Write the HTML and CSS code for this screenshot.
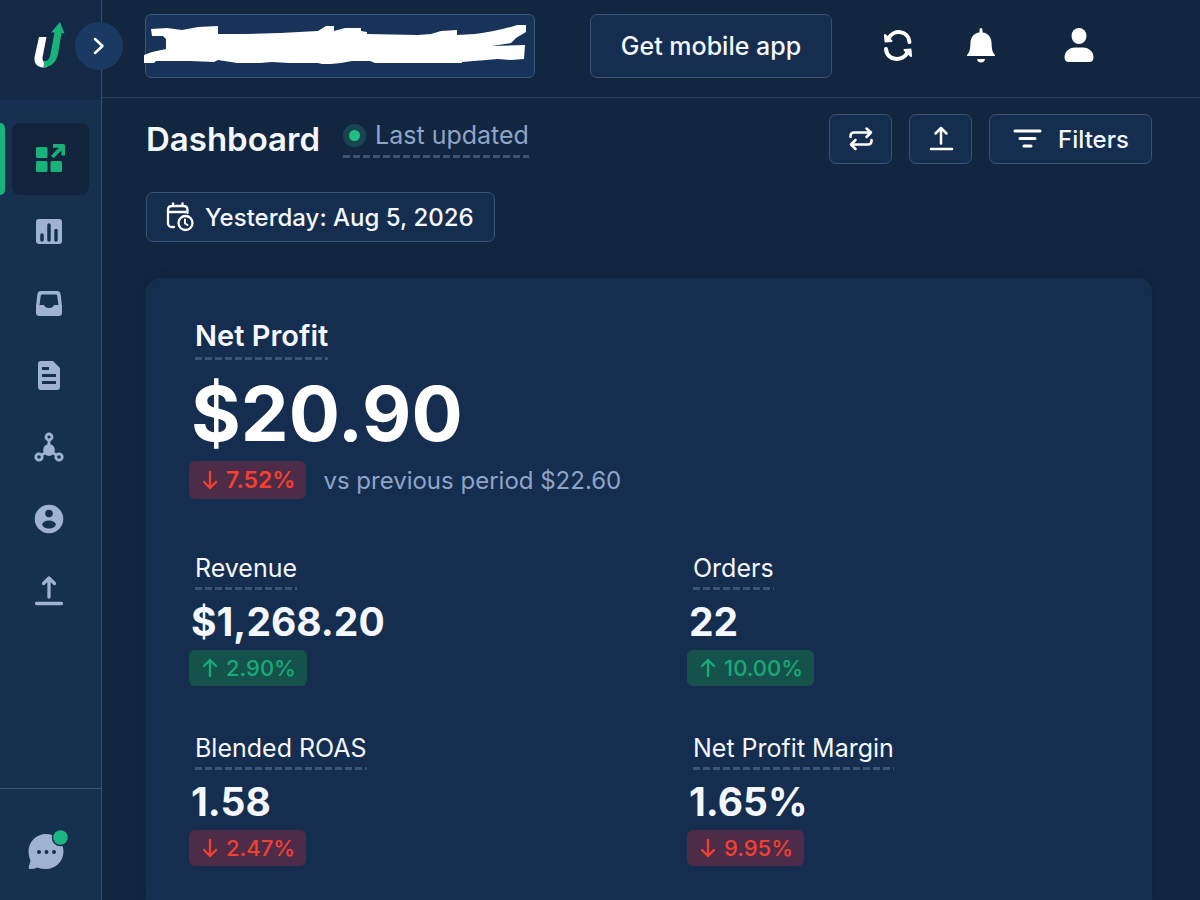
FILE: index.html
```html
<!DOCTYPE html>
<html lang="en">
<head>
    <meta charset="UTF-8">
    <meta name="viewport" content="width=device-width, initial-scale=1.0">
    <title>Dashboard</title>
    <link rel="stylesheet" href="styles.css">
</head>
<body>
    <aside class="sidebar">
        <div class="brand">
            <svg class="logo" width="32" height="48" viewBox="34 21 32 48" aria-hidden="true">
                <path fill="#fff" d="M39 37H46.5L42.5 57.500Q42 61 45 62L47.500 67C38 69 33 64 34.800 56Z"/>
                <path fill="#1ab27b" d="M60 22L64.500 33.500L61.500 33L58 54C56 63 50 67.500 43 67C45 64 43.500 63 43.200 61C47 61.500 49.500 59.500 50.500 54L54.500 32.500L51 32.500Z"/>
            </svg>
            <button class="toggle" aria-label="Expand menu">
                <svg width="24" height="24" viewBox="0 0 24 24" fill="none" stroke="#fff" stroke-width="2.500" stroke-linecap="round" stroke-linejoin="round"><path d="M8 5L15.500 12L8 19"/></svg>
            </button>
        </div>
        <nav class="menu">
            <a class="menu-item active" href="#" aria-label="Dashboard">
                <svg width="30" height="30" viewBox="0 0 30 30" fill="currentColor">
                    <rect x="2" y="3" width="11.500" height="11" rx="1.500"/>
                    <rect x="2" y="17" width="11.500" height="11" rx="1.500"/>
                    <rect x="16.500" y="17" width="11.500" height="11" rx="1.500"/>
                    <path d="M19 0H29.500Q31 0 31 1.500V11.500H27.500V6.500L19.500 14.200L17 11.700L25 3.800H19Z"/>
                </svg>
            </a>
            <a class="menu-item" href="#" aria-label="Reports">
                <svg width="30" height="30" viewBox="0 0 30 30">
                    <rect x="2" y="3" width="26" height="25" rx="3" fill="currentColor"/>
                    <path d="M8 19V24M15 9V24M22 14.500V24" stroke="#16304f" stroke-width="3.500" stroke-linecap="round"/>
                </svg>
            </a>
            <a class="menu-item" href="#" aria-label="Inbox">
                <svg width="30" height="30" viewBox="0 0 30 30">
                    <path fill="currentColor" fill-rule="evenodd" d="M7 3H23Q26 3 26.600 6L28 18V25Q28 28 25 28H5Q2 28 2 25V18L3.400 6Q4 3 7 3ZM8 6.500Q7 6.500 6.800 7.500L5.500 17H10Q11 20 15 20T20 17H24.500L23.200 7.500Q23 6.500 22 6.500Z"/>
                </svg>
            </a>
            <a class="menu-item" href="#" aria-label="Documents">
                <svg width="30" height="30" viewBox="0 0 30 30">
                    <path fill="currentColor" d="M7 1H19L26 8V27Q26 30 23 30H7Q4 30 4 27V4Q4 1 7 1Z"/>
                    <path d="M8 8.500H15M8 15.500H22M8 22.500H22" stroke="#16304f" stroke-width="3"/>
                </svg>
            </a>
            <a class="menu-item" href="#" aria-label="Attribution">
                <svg width="30" height="30" viewBox="0 0 30 30" fill="none" stroke="currentColor" stroke-width="2.800">
                    <circle cx="15" cy="5" r="3"/>
                    <circle cx="5" cy="25" r="3.200"/>
                    <circle cx="25" cy="25" r="3.200"/>
                    <path d="M15 8V14M11 21L7.500 23M19 21L22.500 23"/>
                    <circle cx="15" cy="18" r="4.500" fill="currentColor"/>
                </svg>
            </a>
            <a class="menu-item" href="#" aria-label="Customers">
                <svg width="30" height="30" viewBox="0 0 30 30">
                    <circle cx="15" cy="15" r="14.300" fill="currentColor"/>
                    <circle cx="15" cy="9.500" r="3.800" fill="#16304f"/>
                    <ellipse cx="15" cy="20.500" rx="6.800" ry="4" fill="#16304f"/>
                </svg>
            </a>
            <a class="menu-item" href="#" aria-label="Export">
                <svg width="30" height="30" viewBox="0 0 30 30" fill="none" stroke="currentColor" stroke-width="3.300" stroke-linecap="round" stroke-linejoin="round"><path d="M15 21V2M9.500 7.500L15 2L20.500 7.500M2.500 27.500H27.500"/></svg>
            </a>
        </nav>
        <div class="support">
            <a class="chat" href="#" aria-label="Support chat">
                <svg width="42" height="44" viewBox="0 0 42 44">
                    <path fill="#9fb2d1" d="M19 5C29 5 36.500 13 36.500 22.500S29 40 19 40Q14 40 10.500 38.500Q6 40.500 2.500 40Q1 39.500 2 37L3.500 32Q1.500 27 1.500 22.500C1.500 13 9 5 19 5Z"/>
                    <g fill="#16304f"><circle cx="12" cy="23" r="2"/><circle cx="19.500" cy="23" r="2"/><circle cx="27" cy="23" r="2"/></g>
                    <circle cx="33.500" cy="8.500" r="8" fill="#1db584" stroke="#16304f" stroke-width="1.500"/>
                </svg>
            </a>
        </div>
    </aside>

    <div class="page">
        <header class="topbar">
            <button class="account" aria-label="Select account">
                <svg class="scribble" width="390" height="46" viewBox="144 22 390 46" aria-hidden="true">
                    <path fill="#fff" d="M151 29L167 28L182 30L198 27L218 26V34L245 34L280 33L318 31L326 26H334V31L345 28H361V31L367 32V34L418 35L431 34L441 31L457 30V35L475 34Q495 32 517 25H526V32L516 38L511 43L492 46L525 45L524 59L511 60L498 59L462 62V63H431L400 63L375 63L370 61H352L341 63L331 64H322L318 63H290L272 62L260 63L237 63L218 60L214 62L190 61H156L154 63H144V55L152 52L166 49V39L163 36H152Z"/>
                </svg>
            </button>
            <button class="btn btn-app">Get mobile app</button>
            <div class="actions">
                <button class="icon-btn" aria-label="Refresh">
                    <svg width="36" height="40" viewBox="0 0 36 40" fill="none" stroke="#fff" stroke-width="4" stroke-linecap="round">
                        <path d="M8.500 12.500C13.500 3 28.500 4 29.500 16M27.500 26.500C22.500 36 7 35 6 23"/>
                        <path d="M5 9L5.500 15.500L11.500 15ZM31 30L30.500 23.500L24.500 24Z" fill="#fff" stroke-width="2" stroke-linejoin="round"/>
                    </svg>
                </button>
                <button class="icon-btn" aria-label="Notifications">
                    <svg width="36" height="40" viewBox="0 0 36 40" fill="#fff">
                        <path d="M15.500 4Q15.500 2 17 2T18.500 4V6.500C24 7 27 11 27.500 16C27.800 22 28 26 31 29V30H3V29C6 26 6.200 22 6.500 16C7 11 10 7 15.500 6.500ZM13 33H21Q20.500 36.500 17 36.500T13 33Z"/>
                    </svg>
                </button>
                <button class="icon-btn" aria-label="Profile">
                    <svg width="36" height="40" viewBox="0 0 36 40" fill="#fff">
                        <ellipse cx="17" cy="10" rx="7.500" ry="8"/>
                        <path d="M13 21.500H21C27 21.500 31.500 26 31.500 31Q31.500 36 27.500 36H6.500Q2.500 36 2.500 31C2.500 26 7 21.500 13 21.500Z"/>
                    </svg>
                </button>
            </div>
        </header>

        <main class="content">
            <div class="toolbar">
                <h1>Dashboard</h1>
                <div class="updated dashed"><span class="dot"></span>Last updated</div>
                <div class="tools">
                    <button class="btn btn-square" aria-label="Compare">
                        <svg width="26" height="26" viewBox="0 0 26 26" fill="none" stroke="#fff" stroke-width="2.500" stroke-linecap="round" stroke-linejoin="round"><path d="M2.500 11V10Q2.500 6.500 6 6.500H23M18.500 2.500L23 6.500L18.500 11M23.500 14V15Q23.500 18.500 20 18.500H3M7.500 14L3 18.500L7.500 23"/></svg>
                    </button>
                    <button class="btn btn-square" aria-label="Export">
                        <svg width="26" height="26" viewBox="0 0 26 26" fill="none" stroke="#fff" stroke-width="2.500" stroke-linecap="round" stroke-linejoin="round"><path d="M13 17.500V2M7.500 7.500L13 2L18.500 7.500M3 23H24"/></svg>
                    </button>
                    <button class="btn btn-filters">
                        <svg width="30" height="26" viewBox="0 0 30 26" fill="none" stroke="#fff" stroke-width="3" stroke-linecap="round"><path d="M3 5H28M8 12.500H23M12 20H19"/></svg>
                        Filters
                    </button>
                </div>
            </div>

            <button class="btn btn-date">
                <svg width="28" height="30" viewBox="0 0 28 30" fill="none" stroke="#fff" stroke-width="2.300" stroke-linecap="round" stroke-linejoin="round">
                    <path d="M8 25H6Q2 25 2 21V8Q2 4 6 4H17.500Q21.500 4 21.500 8V11M2 10H21.500M7 1.500V4M16.500 1.500V4"/>
                    <circle cx="19.500" cy="21" r="7"/>
                    <path d="M19 17.500V21.500L21.500 23" stroke-width="2"/>
                </svg>
                Yesterday: Aug 5, 2026
            </button>

            <section class="card">
                <div class="metric metric-main">
                    <h2 class="label dashed">Net Profit</h2>
                    <div class="value">$20.90</div>
                    <div class="compare">
                        <span class="badge down"><svg class="arrow" viewBox="0 0 16 20"><path d="M8 2V18M2 12L8 18L14 12"/></svg>7.52%</span>
                        <span class="previous">vs previous period $22.60</span>
                    </div>
                </div>

                <div class="metrics">
                    <div class="metric">
                        <h3 class="label dashed">Revenue</h3>
                        <div class="value">$1,268.20</div>
                        <span class="badge up"><svg class="arrow" viewBox="0 0 16 20"><path d="M8 18V2M2 8L8 2L14 8"/></svg>2.90%</span>
                    </div>
                    <div class="metric">
                        <h3 class="label dashed">Orders</h3>
                        <div class="value">22</div>
                        <span class="badge up"><svg class="arrow" viewBox="0 0 16 20"><path d="M8 18V2M2 8L8 2L14 8"/></svg>10.00%</span>
                    </div>
                    <div class="metric">
                        <h3 class="label dashed">Blended ROAS</h3>
                        <div class="value">1.58</div>
                        <span class="badge down"><svg class="arrow" viewBox="0 0 16 20"><path d="M8 2V18M2 12L8 18L14 12"/></svg>2.47%</span>
                    </div>
                    <div class="metric">
                        <h3 class="label dashed">Net Profit Margin</h3>
                        <div class="value">1.65%</div>
                        <span class="badge down"><svg class="arrow" viewBox="0 0 16 20"><path d="M8 2V18M2 12L8 18L14 12"/></svg>9.95%</span>
                    </div>
                </div>
            </section>
        </main>
    </div>
</body>
</html>
```
FILE: styles.css
```css
* {
    box-sizing: border-box;
}

body {
    margin: 0;
    min-height: 100vh;
    display: flex;
    font-family: Inter, "Liberation Sans", sans-serif;
    font-size: 24px;
    color: #f4f7fd;
    background: #12263f;
}

h1,
h2,
h3 {
    margin: 0;
}

button {
    font: inherit;
    color: inherit;
    padding: 0;
    border: none;
    background: none;
    cursor: pointer;
}

svg {
    display: block;
    flex-shrink: 0;
    overflow: visible;
}

/* Sidebar */
.sidebar {
    width: 102px;
    flex-shrink: 0;
    display: flex;
    flex-direction: column;
    background: #16304f;
    border-right: 1px solid #3b506e;
}

.brand {
    position: relative;
    height: 100px;
    padding: 21px 34px;
    background: #132945;
}

.toggle {
    position: absolute;
    top: 22px;
    right: -22px;
    width: 48px;
    height: 48px;
    display: flex;
    align-items: center;
    justify-content: center;
    border-radius: 50%;
    background: #1a3963;
}

.menu {
    flex: 1;
    padding: 23px 12px;
}

.menu-item {
    position: relative;
    height: 72px;
    display: flex;
    align-items: center;
    padding-left: 22px;
    border-radius: 8px;
    color: #9fb2d1;
}

.menu-item.active {
    color: #1ab27b;
    background: #12243c;
}

.menu-item.active::before {
    content: "";
    position: absolute;
    left: -12px;
    top: 0;
    bottom: 0;
    width: 5px;
    border-radius: 0 5px 5px 0;
    background: #17b57c;
}

.support {
    height: 112px;
    padding: 40px 27px;
    border-top: 1px solid #3b506e;
}

.chat {
    display: block;
}

/* Top bar */
.page {
    flex: 1;
    min-width: 0;
    display: flex;
    flex-direction: column;
}

.topbar {
    display: flex;
    align-items: center;
    height: 98px;
    padding: 0 102px 6px 43px;
    border-bottom: 1px solid #2c405c;
}

.account {
    position: relative;
    width: 390px;
    height: 64px;
    margin-right: 55px;
    border: 1px solid #36547c;
    border-radius: 6px;
    background: #173359;
}

.scribble {
    position: absolute;
    left: -2px;
    top: 7px;
}

.btn {
    display: flex;
    align-items: center;
    justify-content: center;
    height: 50px;
    border: 1px solid #3a5275;
    border-radius: 7px;
    background: #152d4f;
    font-weight: 500;
    white-space: nowrap;
}

.btn-app {
    height: 64px;
    width: 242px;
    font-size: 25px;
}

.actions {
    flex: 1;
    display: flex;
    justify-content: space-between;
    padding-left: 48px;
}

.icon-btn:nth-child(2) {
    margin-right: 14px;
}

/* Toolbar */
.content {
    flex: 1;
    display: flex;
    flex-direction: column;
    align-items: flex-start;
    padding: 16px 48px 0 44px;
}

.toolbar {
    align-self: stretch;
    display: flex;
    align-items: center;
}

h1 {
    font-size: 33px;
    line-height: 50px;
    font-weight: 600;
}

.dashed {
    padding-bottom: 8px;
    background: repeating-linear-gradient(to right, #3d5373 0 7px, transparent 7px 10px) bottom / 100% 3px no-repeat;
}

.updated {
    display: flex;
    align-items: center;
    align-self: flex-start;
    gap: 9px;
    margin-left: 23px;
    padding-bottom: 2px;
    font-size: 25px;
    line-height: 42px;
    color: #8fa4c9;
}

.dot {
    width: 23px;
    height: 23px;
    border: 6px solid #17464f;
    border-radius: 50%;
    background: #1fbf83;
}

.tools {
    display: flex;
    gap: 17px;
    margin-left: auto;
}

.btn-square {
    width: 63px;
}

.btn-filters {
    width: 163px;
    gap: 16px;
}

.btn-date {
    margin-top: 28px;
    padding: 0 20px 0 19px;
    gap: 11px;
}

/* Metrics card */
.card {
    align-self: stretch;
    flex: 1;
    margin-top: 36px;
    padding: 42px 43px 32px;
    border-radius: 14px 14px 0 0;
    background: #152d4e;
    box-shadow: 0 0 8px #10213a;
}

.metric {
    display: flex;
    flex-direction: column;
    align-items: flex-start;
}

.label {
    margin-left: 6px;
    font-size: 25px;
    line-height: 28px;
    font-weight: 400;
}

.value {
    margin-left: 2px;
    font-size: 39px;
    line-height: 40px;
    font-weight: 700;
    padding: 12px 0 8px;
}

.metric-main .label {
    font-size: 29px;
    line-height: 32px;
    font-weight: 600;
}

.metric-main .value {
    font-size: 76px;
    line-height: 80px;
    padding: 13px 0 8px;
    color: #fff;
}

.compare {
    display: flex;
    align-items: center;
    gap: 17px;
}

.previous {
    color: #8fa4c9;
}

.badge {
    display: flex;
    align-items: center;
    gap: 8px;
    height: 36px;
    padding: 0 11px 0 13px;
    border-radius: 6px;
    font-size: 22px;
    font-weight: 500;
}

.metric-main .badge {
    height: 38px;
    font-size: 23px;
    font-weight: 600;
}

.arrow {
    width: 16px;
    height: 20px;
    fill: none;
    stroke: currentColor;
    stroke-width: 2.3;
    stroke-linecap: round;
    stroke-linejoin: round;
}

.up {
    color: #17ab78;
    background: #15524c;
}

.down {
    color: #f5402f;
    background: #4c2c49;
}

.metrics {
    display: grid;
    grid-template-columns: 1fr 1fr;
    row-gap: 48px;
    margin-top: 55px;
    margin-right: -76px;
}
```
